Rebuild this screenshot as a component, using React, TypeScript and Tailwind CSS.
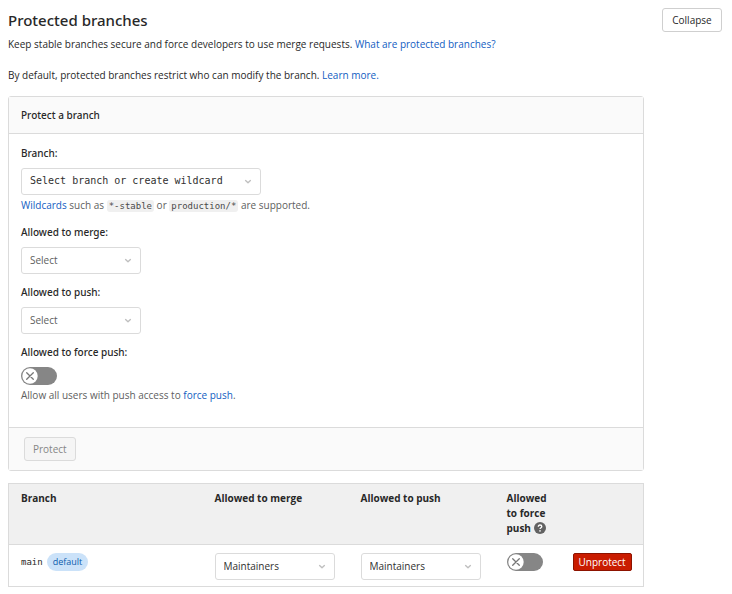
import { useId, useState } from "react";

const link = "text-[#125dc2] hover:underline";
const label = "mb-[7px] block font-['Noto_Sans',sans-serif] text-[10px] leading-4 font-medium";
const help = "text-[10px] leading-4 text-[#5e5e5e]";
const code =
  "rounded-[3px] bg-[#f0f0f0] px-0.5 py-px font-['DejaVu_Sans_Mono',monospace] text-[9px] text-[#4a4a4a]";

type PickerProps = {
  id?: string;
  name: string;
  options: string[];
  width: string;
  text: string;
};

function Picker({ id, name, options, width, text }: PickerProps) {
  return (
    <div className={`relative ${width}`}>
      <select
        id={id}
        aria-label={id ? undefined : name}
        className={`block h-[27px] w-full appearance-none rounded-[3px] border border-[#dbdbdb] bg-white pr-6 pb-0.5 pl-2 ${text}`}
      >
        {options.map((o) => (
          <option key={o}>{o}</option>
        ))}
      </select>
      <svg
        viewBox="0 0 8 6"
        className="pointer-events-none absolute top-[11px] right-[9px] h-1.5 w-2"
        fill="none"
        stroke="#bfbfbf"
        strokeWidth="1.4"
        strokeLinecap="round"
        strokeLinejoin="round"
      >
        <path d="M1.6 1.6 4 3.8 6.4 1.6" />
      </svg>
    </div>
  );
}

function Toggle({ id, name }: { id?: string; name: string }) {
  const [on, setOn] = useState(false);
  return (
    <button
      id={id}
      type="button"
      role="switch"
      aria-checked={on}
      aria-label={name}
      onClick={() => setOn(!on)}
      className={`flex h-[18px] w-9 items-center rounded-full px-px ${on ? "justify-end bg-[#1f75cb]" : "bg-[#868686]"}`}
    >
      <svg viewBox="0 0 16 16" className="size-4" fill="none">
        <circle cx="8" cy="8" r="7.7" fill="#fff" />
        <path
          d={on ? "M4.5 8.2 7 10.7 11.6 5.6" : "M4.7 4.7 11.3 11.3M11.3 4.7 4.7 11.3"}
          stroke={on ? "#1f75cb" : "#777"}
          strokeWidth="1.3"
          strokeLinecap="round"
        />
      </svg>
    </button>
  );
}

export default function App() {
  const id = useId();
  return (
    <main className="flex items-start gap-[18px] bg-white pt-2 pr-[10px] pb-2 pl-2 font-['Open_Sans','Noto_Sans',sans-serif] text-[10px] leading-4 text-[#282828]">
      <div className="min-w-0 flex-1">
        <h2 className="font-['Noto_Sans',sans-serif] text-[15px] leading-6 font-medium">Protected branches</h2>
        <p className="mt-1">
          Keep stable branches secure and force developers to use merge requests.{" "}
          <a href="#about" className={link}>What are protected branches?</a>
        </p>
        <p className="mt-[15px]">
          By default, protected branches restrict who can modify the branch.{" "}
          <a href="#learn" className={link}>Learn more.</a>
        </p>

        <form className="mt-[13px] rounded-[3px] border border-[#dbdbdb]" onSubmit={(e) => e.preventDefault()}>
          <h3 className="border-b border-[#dbdbdb] bg-[#fafafa] px-3 py-[10px] font-['Noto_Sans',sans-serif] font-medium">Protect a branch</h3>
          <div className="flex flex-col gap-[10px] px-3 pt-[11px] pb-6">
            <div>
              <label htmlFor={`${id}-branch`} className={label}>Branch:</label>
              <Picker
                id={`${id}-branch`}
                name="Branch"
                options={["Select branch or create wildcard"]}
                width="w-60"
                text="font-['DejaVu_Sans_Mono',monospace] text-[10px] text-[#303030]"
              />
              <p className={`${help} mt-0.5`}>
                <a href="#wildcards" className={link}>Wildcards</a> such as <code className={code}>*-stable</code> or{" "}
                <code className={code}>production/*</code> are supported.
              </p>
            </div>
            <div>
              <label htmlFor={`${id}-merge`} className={label}>Allowed to merge:</label>
              <Picker id={`${id}-merge`} name="Allowed to merge" options={["Select", "Maintainers"]} width="w-[120px]" text="text-[10px] text-[#5e5e5e]" />
            </div>
            <div>
              <label htmlFor={`${id}-push`} className={label}>Allowed to push:</label>
              <Picker id={`${id}-push`} name="Allowed to push" options={["Select", "Maintainers"]} width="w-[120px]" text="text-[10px] text-[#5e5e5e]" />
            </div>
            <div>
              <label htmlFor={`${id}-force`} className={label}>Allowed to force push:</label>
              <Toggle id={`${id}-force`} name="Allowed to force push" />
              <p className={`${help} mt-0.5`}>
                Allow all users with push access to <a href="#force" className={link}>force push</a>.
              </p>
            </div>
          </div>
          <div className="border-t border-[#dbdbdb] bg-[#fafafa] px-[15px] py-[9px]">
            <button type="submit" disabled className="block h-6 rounded-[3px] border border-[#dbdbdb] bg-[#f5f5f5] px-2 text-[#868686]">
              Protect
            </button>
          </div>
        </form>

        <table className="mt-3 w-full table-fixed border border-[#dbdbdb] text-left">
          <colgroup>
            <col />
            <col className="w-[146px]" />
            <col className="w-[146px]" />
            <col className="w-[66px]" />
            <col className="w-[83px]" />
          </colgroup>
          <thead>
            <tr className="border-b border-[#dbdbdb] bg-[#f0f0f0] align-top leading-[15px]">
              <th className="px-3 pt-[7px] pb-2 font-bold">Branch</th>
              <th className="px-3 pt-[7px] pb-2 font-bold">Allowed to merge</th>
              <th className="px-3 pt-[7px] pb-2 font-bold">Allowed to push</th>
              <th className="px-3 pt-[7px] pb-2 font-bold">
                Allowed to force push{" "}
                <svg viewBox="0 0 12 12" className="inline size-3 align-[-2px]" fill="none">
                  <circle cx="6" cy="6" r="6" fill="#626262" />
                  <path d="M4.3 4.7C4.3 3.6 5 3 6 3s1.8.6 1.8 1.5C7.8 5.7 6 5.7 6 7.1" stroke="#fff" strokeWidth="1.3" />
                  <circle cx="6" cy="8.9" r=".8" fill="#fff" />
                </svg>
              </th>
              <th aria-label="Actions" />
            </tr>
          </thead>
          <tbody>
            <tr className="align-top">
              <td className="px-3 pt-2">
                <div className="flex items-center gap-1">
                  <span className="font-['DejaVu_Sans_Mono',monospace] text-[9px]">main</span>
                  <span className="rounded-full bg-[#cbe2f9] px-1.5 py-px text-[9px] text-[#0b5cad]">default</span>
                </div>
              </td>
              <td className="px-3 pt-2 pb-1.5">
                <Picker name="Allowed to merge" options={["Maintainers"]} width="w-[120px]" text="text-[10px] text-[#303030]" />
              </td>
              <td className="px-3 pt-2 pb-1.5">
                <Picker name="Allowed to push" options={["Maintainers"]} width="w-[120px]" text="text-[10px] text-[#303030]" />
              </td>
              <td className="pt-2 pl-3">
                <Toggle name="Allowed to force push" />
              </td>
              <td className="pt-2 pl-3">
                <button type="button" className="block h-[18px] rounded-[2px] border border-[#8d1300] bg-[#c91c00] px-[5px] leading-4 text-white">
                  Unprotect
                </button>
              </td>
            </tr>
          </tbody>
        </table>
      </div>
      <button type="button" className="h-6 w-[60px] rounded-[3px] border border-[#cfcfcf] bg-white">
        Collapse
      </button>
    </main>
  );
}
